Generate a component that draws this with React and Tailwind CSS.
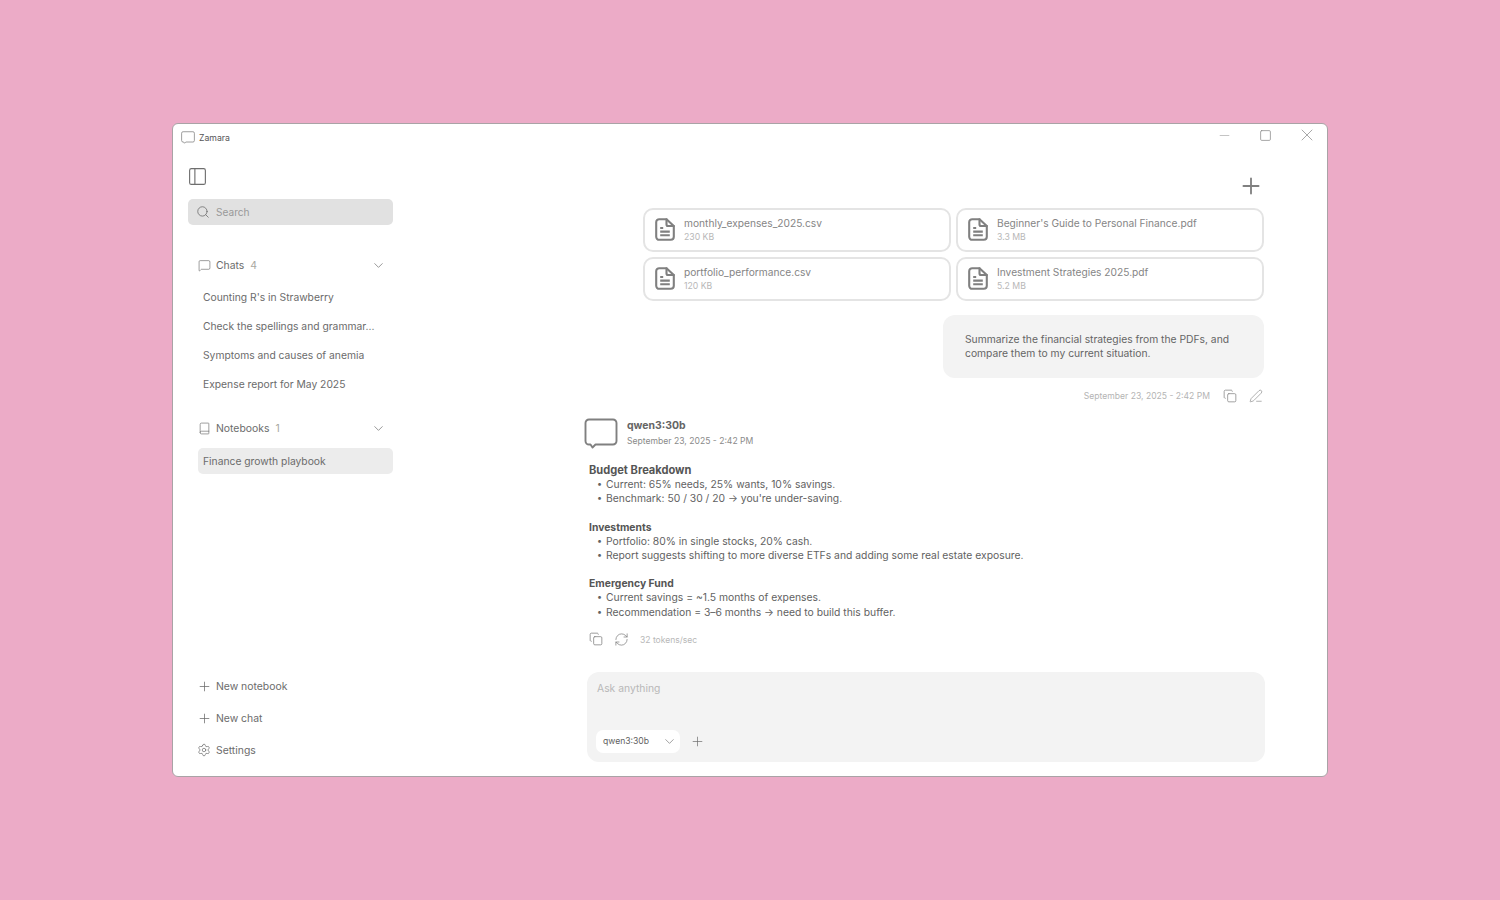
import React from "react";
import { Search, ChevronDown, MessageSquare, Book, Plus, Settings, Copy, PenLine, RefreshCw, PanelLeft, Minus, Square, X } from "lucide-react";

const Bubble = ({ className, sw = 1.5 }) => (
  <svg viewBox="0 0 34 31" fill="none" stroke="currentColor" strokeWidth={sw} strokeLinejoin="round" className={className}>
    <path d="M5 1.5h24a3.5 3.5 0 0 1 3.5 3.5v18a3.5 3.5 0 0 1-3.5 3.5H11.5L8.5 29.5 6.5 26.5H5A3.5 3.5 0 0 1 1.5 23V5A3.5 3.5 0 0 1 5 1.5z" />
  </svg>
);

const DocIcon = () => (
  <svg viewBox="0 0 20 23" fill="none" stroke="#808080" strokeWidth="2.1" strokeLinejoin="round" strokeLinecap="round" className="mb-[2px] h-[23px] w-5 shrink-0">
    <path d="M4.2 1.2h7.3L18.8 8v10.8a3 3 0 0 1-3 3H4.2a3 3 0 0 1-3-3V4.2a3 3 0 0 1 3-3z" />
    <path d="M11.5 1.2V6.5A1.5 1.5 0 0 0 13 8h5.8" />
    <path d="M5.2 10h3M5.2 13.6h9.6M5.2 17.2h9.6" strokeLinecap="butt" />
  </svg>
);

const FileCard = ({ name, size }) => (
  <div className="flex h-11 items-center rounded-[10px] border-2 border-[#e4e4e4] pl-[10px]">
    <DocIcon />
    <div className="ml-[9px] flex flex-col">
      <span className="text-[10.2px] leading-[15px] text-[#858585]">{name}</span>
      <span className="text-[8.7px] leading-[13px] text-[#b8b8b8]">{size}</span>
    </div>
  </div>
);

const Section = ({ title, titleSize, items }) => (
  <div className="text-[10.35px] leading-[14.2px] text-[#626262]">
    <div className={`font-bold text-[#555555] ${titleSize}`}>{title}</div>
    <ul>
      {items.map((t) => (
        <li key={t} className="flex pl-[8px]">
          <span className="w-[9px] shrink-0 text-[9px] leading-[14.2px]">•</span>
          <span>{t}</span>
        </li>
      ))}
    </ul>
  </div>
);

const NavRow = ({ icon: Icon, label, count, iconClass = "h-[13px] w-[13px]" }) => (
  <div className="flex h-4 items-center pl-[25px] pr-[7px] text-[10.4px] text-[#6b6b6b]">
    <span className="flex w-3 shrink-0 items-center justify-center">
      <Icon className={`${iconClass} shrink-0 text-[#6a6a6a]`} strokeWidth={1.2} />
    </span>
    <span className="ml-[6px] mt-px">{label}</span>
    {count && <span className="ml-[6px] mt-px text-[#a8a8a0]">{count}</span>}
    {count && <ChevronDown className="ml-auto h-[15px] w-[15px] text-[#6a6a6a]" strokeWidth={1.1} />}
  </div>
);

export default function App() {
  return (
    <div className="flex h-screen items-center justify-center bg-[#ecabc7] font-['Inter',sans-serif]">
      <div className="flex h-[654px] w-[1156px] flex-col overflow-hidden rounded-[6px] border border-[#a9a3a6] bg-white">
        <div className="flex h-[27px] shrink-0 items-center pl-2 pr-[10px]">
          <Bubble className="h-[13px] w-[14px] text-[#8a8a8a]" sw={2} />
          <span className="ml-[4px] mt-[2px] text-[8.7px] text-[#555555]">Zamara</span>
          <div className="mb-[5px] ml-auto flex items-center">
            <span className="flex h-5 w-5 items-center justify-center">
              <Minus className="h-[15px] w-[15px] text-[#a0a0a0]" strokeWidth={1} />
            </span>
            <span className="ml-[21px] flex h-5 w-5 items-center justify-center">
              <Square className="h-[13px] w-[13px] text-[#8a8a8a]" strokeWidth={1.4} />
            </span>
            <span className="ml-[22px] flex h-5 w-5 items-center justify-center">
              <X className="h-5 w-5 text-[#8a8a8a]" strokeWidth={0.9} />
            </span>
          </div>
        </div>

        <div className="flex min-h-0 flex-1">
          <aside className="flex w-[222px] shrink-0 flex-col pb-[18px] pl-[15px] pr-[2px]">
            <PanelLeft className="ml-[-1px] mt-[15px] h-[21px] w-[21px] text-[#6e6e6e]" strokeWidth={1.3} />
            <div className="mt-3 flex h-[26px] w-[205px] items-center rounded-[5px] bg-[#e1e1e1] pl-[8px]">
              <Search className="h-[14px] w-[14px] text-[#6a6a6a]" strokeWidth={1.35} />
              <span className="ml-[6px] mt-px text-[10.1px] text-[#999999]">Search</span>
            </div>

            <div className="mt-8 ml-[-15px]">
              <NavRow icon={MessageSquare} label="Chats" count="4" />
            </div>
            <div className="mt-[17px] flex flex-col gap-[15px] pl-[15px] text-[10.3px] leading-[14px] text-[#6b6b6b]">
              <div>Counting R's in Strawberry</div>
              <div>Check the spellings and grammar...</div>
              <div>Symptoms and causes of anemia</div>
              <div>Expense report for May 2025</div>
            </div>

            <div className="mt-[29px] ml-[-15px]">
              <NavRow icon={Book} label="Notebooks" count="1" />
            </div>
            <div className="ml-[10px] mt-[12px] flex h-[26px] w-[195px] items-center rounded-[5px] bg-[#ececec] pl-[5px] pt-[2px] text-[10.3px] text-[#6b6b6b]">
              Finance growth playbook
            </div>

            <div className="ml-[-15px] mt-auto flex flex-col gap-4">
              <NavRow icon={Plus} label="New notebook" iconClass="h-[15px] w-[15px]" />
              <NavRow icon={Plus} label="New chat" iconClass="h-[15px] w-[15px]" />
              <NavRow icon={Settings} label="Settings" iconClass="h-[14px] w-[14px]" />
            </div>
          </aside>

          <main className="flex min-w-0 flex-1 flex-col pb-[14px]">
            <div className="flex justify-end pr-[63px] pt-[22px]">
              <Plus className="h-[26px] w-[26px] text-[#808080]" strokeWidth={1.7} />
            </div>
            <div className="ml-[248px] mr-[63px] mt-[9px] grid grid-cols-2 gap-x-[5px] gap-y-[5px]">
              <FileCard name="monthly_expenses_2025.csv" size="230 KB" />
              <FileCard name="Beginner's Guide to Personal Finance.pdf" size="3.3 MB" />
              <FileCard name="portfolio_performance.csv" size="120 KB" />
              <FileCard name="Investment Strategies 2025.pdf" size="5.2 MB" />
            </div>

            <div className="mr-[63px] mt-[14px] flex h-[63px] w-[321px] items-center self-end rounded-[12px] bg-[#f3f3f3] pb-[2px] pl-[22px] pr-[30px] text-[10.3px] leading-[14px] text-[#656565]">
              Summarize the financial strategies from the PDFs, and compare them to my current situation.
            </div>
            <div className="mr-[64px] mt-[9px] mb-px flex h-[17px] items-center justify-end text-[#858585]">
              <span className="mt-[2px] text-[8.6px] text-[#b4b4b4]">September 23, 2025 - 2:42 PM</span>
              <Copy className="ml-[13px] h-[14px] w-[14px]" strokeWidth={1.3} />
              <PenLine className="ml-[12px] h-[14px] w-[14px]" strokeWidth={1.1} />
            </div>

            <div className="ml-[189px] mt-[13px] flex">
              <Bubble className="h-[31px] w-[34px] text-[#808080]" sw={1.9} />
              <div className="ml-[9px] flex flex-col">
                <span className="text-[10.45px] font-bold leading-[15px] text-[#656565]">qwen3:30b</span>
                <span className="text-[8.6px] leading-[16px] text-[#8a8a8a]">September 23, 2025 - 2:42 PM</span>
              </div>
            </div>

            <div className="ml-[194px] mt-[14px] flex flex-col gap-[14px]">
              <Section title="Budget Breakdown" titleSize="text-[11.1px]" items={["Current: 65% needs, 25% wants, 10% savings.", "Benchmark: 50 / 30 / 20 → you're under-saving."]} />
              <Section title="Investments" titleSize="text-[10.35px]" items={["Portfolio: 80% in single stocks, 20% cash.", "Report suggests shifting to more diverse ETFs and adding some real estate exposure."]} />
              <Section title="Emergency Fund" titleSize="text-[10.35px]" items={["Current savings = ~1.5 months of expenses.", "Recommendation = 3–6 months → need to build this buffer."]} />
            </div>

            <div className="ml-[194px] mt-[13px] flex items-center text-[#7c7c7c]">
              <Copy className="h-[14px] w-[14px]" strokeWidth={1.3} />
              <RefreshCw className="ml-[11px] h-[15px] w-[15px]" strokeWidth={1.15} />
              <span className="ml-[11px] mt-[2px] text-[8.55px] text-[#b8b8b8]">32 tokens/sec</span>
            </div>

            <div className="ml-[192px] mr-[62px] mt-auto flex h-[90px] flex-col rounded-[12px] bg-[#f3f3f3] px-[9px] pb-[9px] pt-[9px]">
              <span className="pl-px text-[10.35px] leading-[14px] text-[#b8b8b8]">Ask anything</span>
              <div className="mt-auto flex items-center">
                <div className="flex h-[23px] w-[84px] items-center justify-between rounded-[7px] bg-white pl-[7px] pr-[3px]">
                  <span className="text-[8.6px] text-[#5f5f5f]">qwen3:30b</span>
                  <ChevronDown className="h-[15px] w-[15px] text-[#6a6a6a]" strokeWidth={1} />
                </div>
                <Plus className="ml-[10px] h-[15px] w-[15px] text-[#6a6a6a]" strokeWidth={1.1} />
              </div>
            </div>
          </main>
        </div>
      </div>
    </div>
  );
}
